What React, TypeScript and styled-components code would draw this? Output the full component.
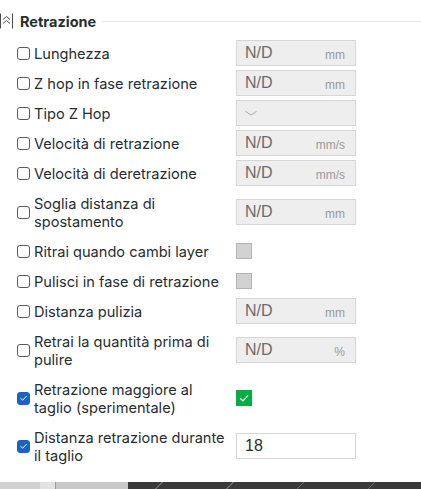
import * as React from 'react';
import styled, { createGlobalStyle } from 'styled-components';

const GlobalStyle = createGlobalStyle`
  html, body {
    margin: 0;
    padding: 0;
    background: #ffffff;
  }
  body {
    width: 421px;
    height: 489px;
    overflow: hidden;
    font-family: Inter, "Noto Sans", sans-serif;
    color: #262e30;
  }
`;

const Page = styled.div`
  display: flex;
  flex-direction: column;
  height: 489px;
`;

const Header = styled.div`
  display: flex;
  align-items: center;
  height: 30px;
  margin-top: 6px;
  margin-bottom: 2px;
`;

const HeaderIcon = styled.svg`
  flex: none;
  width: 13px;
  height: 16px;
  margin-right: 7px;
`;

const HeaderTitle = styled.div`
  font-size: 14.5px;
  font-weight: 700;
  color: #262e30;
  white-space: nowrap;
`;

const HeaderRule = styled.div`
  flex: 1;
  height: 1px;
  background: #e6e6e6;
  margin-left: 6px;
`;

const Rows = styled.div`
  display: flex;
  flex-direction: column;
`;

const Row = styled.div<{ $tall?: boolean }>`
  display: grid;
  grid-template-columns: 13px 198px 120px;
  column-gap: 4px;
  align-items: center;
  padding-left: 17px;
  height: ${(p) => (p.$tall ? 48 : 30)}px;
`;

const Check = styled.div<{ $on?: boolean }>`
  width: 13px;
  height: 13px;
  box-sizing: border-box;
  border-radius: 3px;
  border: 1px solid ${(p) => (p.$on ? '#1a62c4' : '#5a5a5a')};
  background: ${(p) => (p.$on ? '#1a62c4' : '#ffffff')};
  display: flex;
  align-items: center;
  justify-content: center;
`;

const Label = styled.div`
  font-size: 14.6px;
  line-height: 18px;
  white-space: nowrap;
  color: #262e30;
  margin-top: 1px;
`;

const Field = styled.div<{ $active?: boolean }>`
  display: flex;
  align-items: center;
  justify-content: space-between;
  box-sizing: border-box;
  width: 120px;
  height: 26px;
  padding: 0 10px 0 8px;
  border: 1px solid ${(p) => (p.$active ? '#d8d8d8' : '#d6d6d6')};
  background: ${(p) => (p.$active ? '#ffffff' : '#eeeeee')};
`;

const Value = styled.span<{ $active?: boolean }>`
  font-family: "Liberation Sans", Arial, sans-serif;
  font-size: 16px;
  color: ${(p) => (p.$active ? '#262e30' : '#6b6b6b')};
`;

const Unit = styled.span`
  font-family: "Liberation Sans", Arial, sans-serif;
  font-size: 12px;
  color: #9a9a9a;
  margin-top: 3px;
`;

const Toggle = styled.div<{ $on?: boolean }>`
  width: 16px;
  height: 16px;
  box-sizing: border-box;
  border: 1px solid ${(p) => (p.$on ? '#00ae42' : '#b4b4b4')};
  background: ${(p) => (p.$on ? '#00ae42' : '#d2d2d2')};
  display: flex;
  align-items: center;
  justify-content: center;
`;

const Viewport = styled.div`
  margin-top: auto;
  height: 7px;
  background:
    repeating-linear-gradient(135deg, transparent 0 24px, #6a6a6a 24px 25px, transparent 25px 50px) 128px 0 / 100% 100% no-repeat,
    linear-gradient(
      to right,
      #d2d2d2 0px,
      #d2d2d2 40px,
      #e2e2e2 40px,
      #e2e2e2 55px,
      #9a9a9a 55px,
      #9a9a9a 56px,
      #c9c9c9 56px,
      #c9c9c9 128px,
      #3a3a3a 128px
    );
`;

type Control =
  | { kind: 'field'; unit?: string; value?: string }
  | { kind: 'select' }
  | { kind: 'toggle'; on?: boolean };

interface IOption {
  label: string[];
  checked?: boolean;
  control: Control;
}

const options: IOption[] = [
  { label: ['Lunghezza'], control: { kind: 'field', unit: 'mm' } },
  { label: ['Z hop in fase retrazione'], control: { kind: 'field', unit: 'mm' } },
  { label: ['Tipo Z Hop'], control: { kind: 'select' } },
  { label: ['Velocità di retrazione'], control: { kind: 'field', unit: 'mm/s' } },
  { label: ['Velocità di deretrazione'], control: { kind: 'field', unit: 'mm/s' } },
  { label: ['Soglia distanza di', 'spostamento'], control: { kind: 'field', unit: 'mm' } },
  { label: ['Ritrai quando cambi layer'], control: { kind: 'toggle' } },
  { label: ['Pulisci in fase di retrazione'], control: { kind: 'toggle' } },
  { label: ['Distanza pulizia'], control: { kind: 'field', unit: 'mm' } },
  { label: ['Retrai la quantità prima di', 'pulire'], control: { kind: 'field', unit: '%' } },
  { label: ['Retrazione maggiore al', 'taglio (sperimentale)'], checked: true, control: { kind: 'toggle', on: true } },
  { label: ['Distanza retrazione durante', 'il taglio'], checked: true, control: { kind: 'field', value: '18' } },
];

const TickMark: React.FC<{ size: number }> = ({ size }) => (
  <svg width={size} height={size} viewBox="0 0 16 16">
    <path d="M3.5 8.2 L6.8 11.2 L12.6 5" fill="none" stroke="#ffffff" strokeWidth={1.4} />
  </svg>
);

function renderControl(control: Control) {
  if (control.kind === 'toggle') {
    return <Toggle $on={control.on}>{control.on && <TickMark size={16} />}</Toggle>;
  }
  if (control.kind === 'select') {
    return (
      <Field>
        <svg width="12" height="5" viewBox="0 0 12 5">
          <path d="M0.5 0.5 L6 4 L11.5 0.5" fill="none" stroke="#a8a8a8" strokeWidth={1} />
        </svg>
      </Field>
    );
  }
  const active = !!control.value;
  return (
    <Field $active={active}>
      <Value $active={active}>{control.value ?? 'N/D'}</Value>
      {control.unit && <Unit>{control.unit}</Unit>}
    </Field>
  );
}

const App: React.FC = () => (
  <Page>
    <GlobalStyle />
    <Header>
      <HeaderIcon viewBox="0 0 13 16">
        <path d="M0.5 0.5 V15.5 M12.5 0.5 V15.5" stroke="#4a4a4a" strokeWidth={1} />
        <path d="M3 6.5 L6.5 3.5 L10 6.5 M3 10.5 L6.5 7.5 L10 10.5" fill="none" stroke="#4a4a4a" strokeWidth={1} />
      </HeaderIcon>
      <HeaderTitle>Retrazione</HeaderTitle>
      <HeaderRule />
    </Header>
    <Rows>
      {options.map((opt, i) => (
        <Row key={`opt-${i}`} $tall={opt.label.length > 1}>
          <Check $on={opt.checked}>{opt.checked && <TickMark size={12} />}</Check>
          <Label>
            {opt.label.map((line, j) => (
              <div key={`line-${j}`}>{line}</div>
            ))}
          </Label>
          <div>{renderControl(opt.control)}</div>
        </Row>
      ))}
    </Rows>
    <Viewport />
  </Page>
);

export default App;
